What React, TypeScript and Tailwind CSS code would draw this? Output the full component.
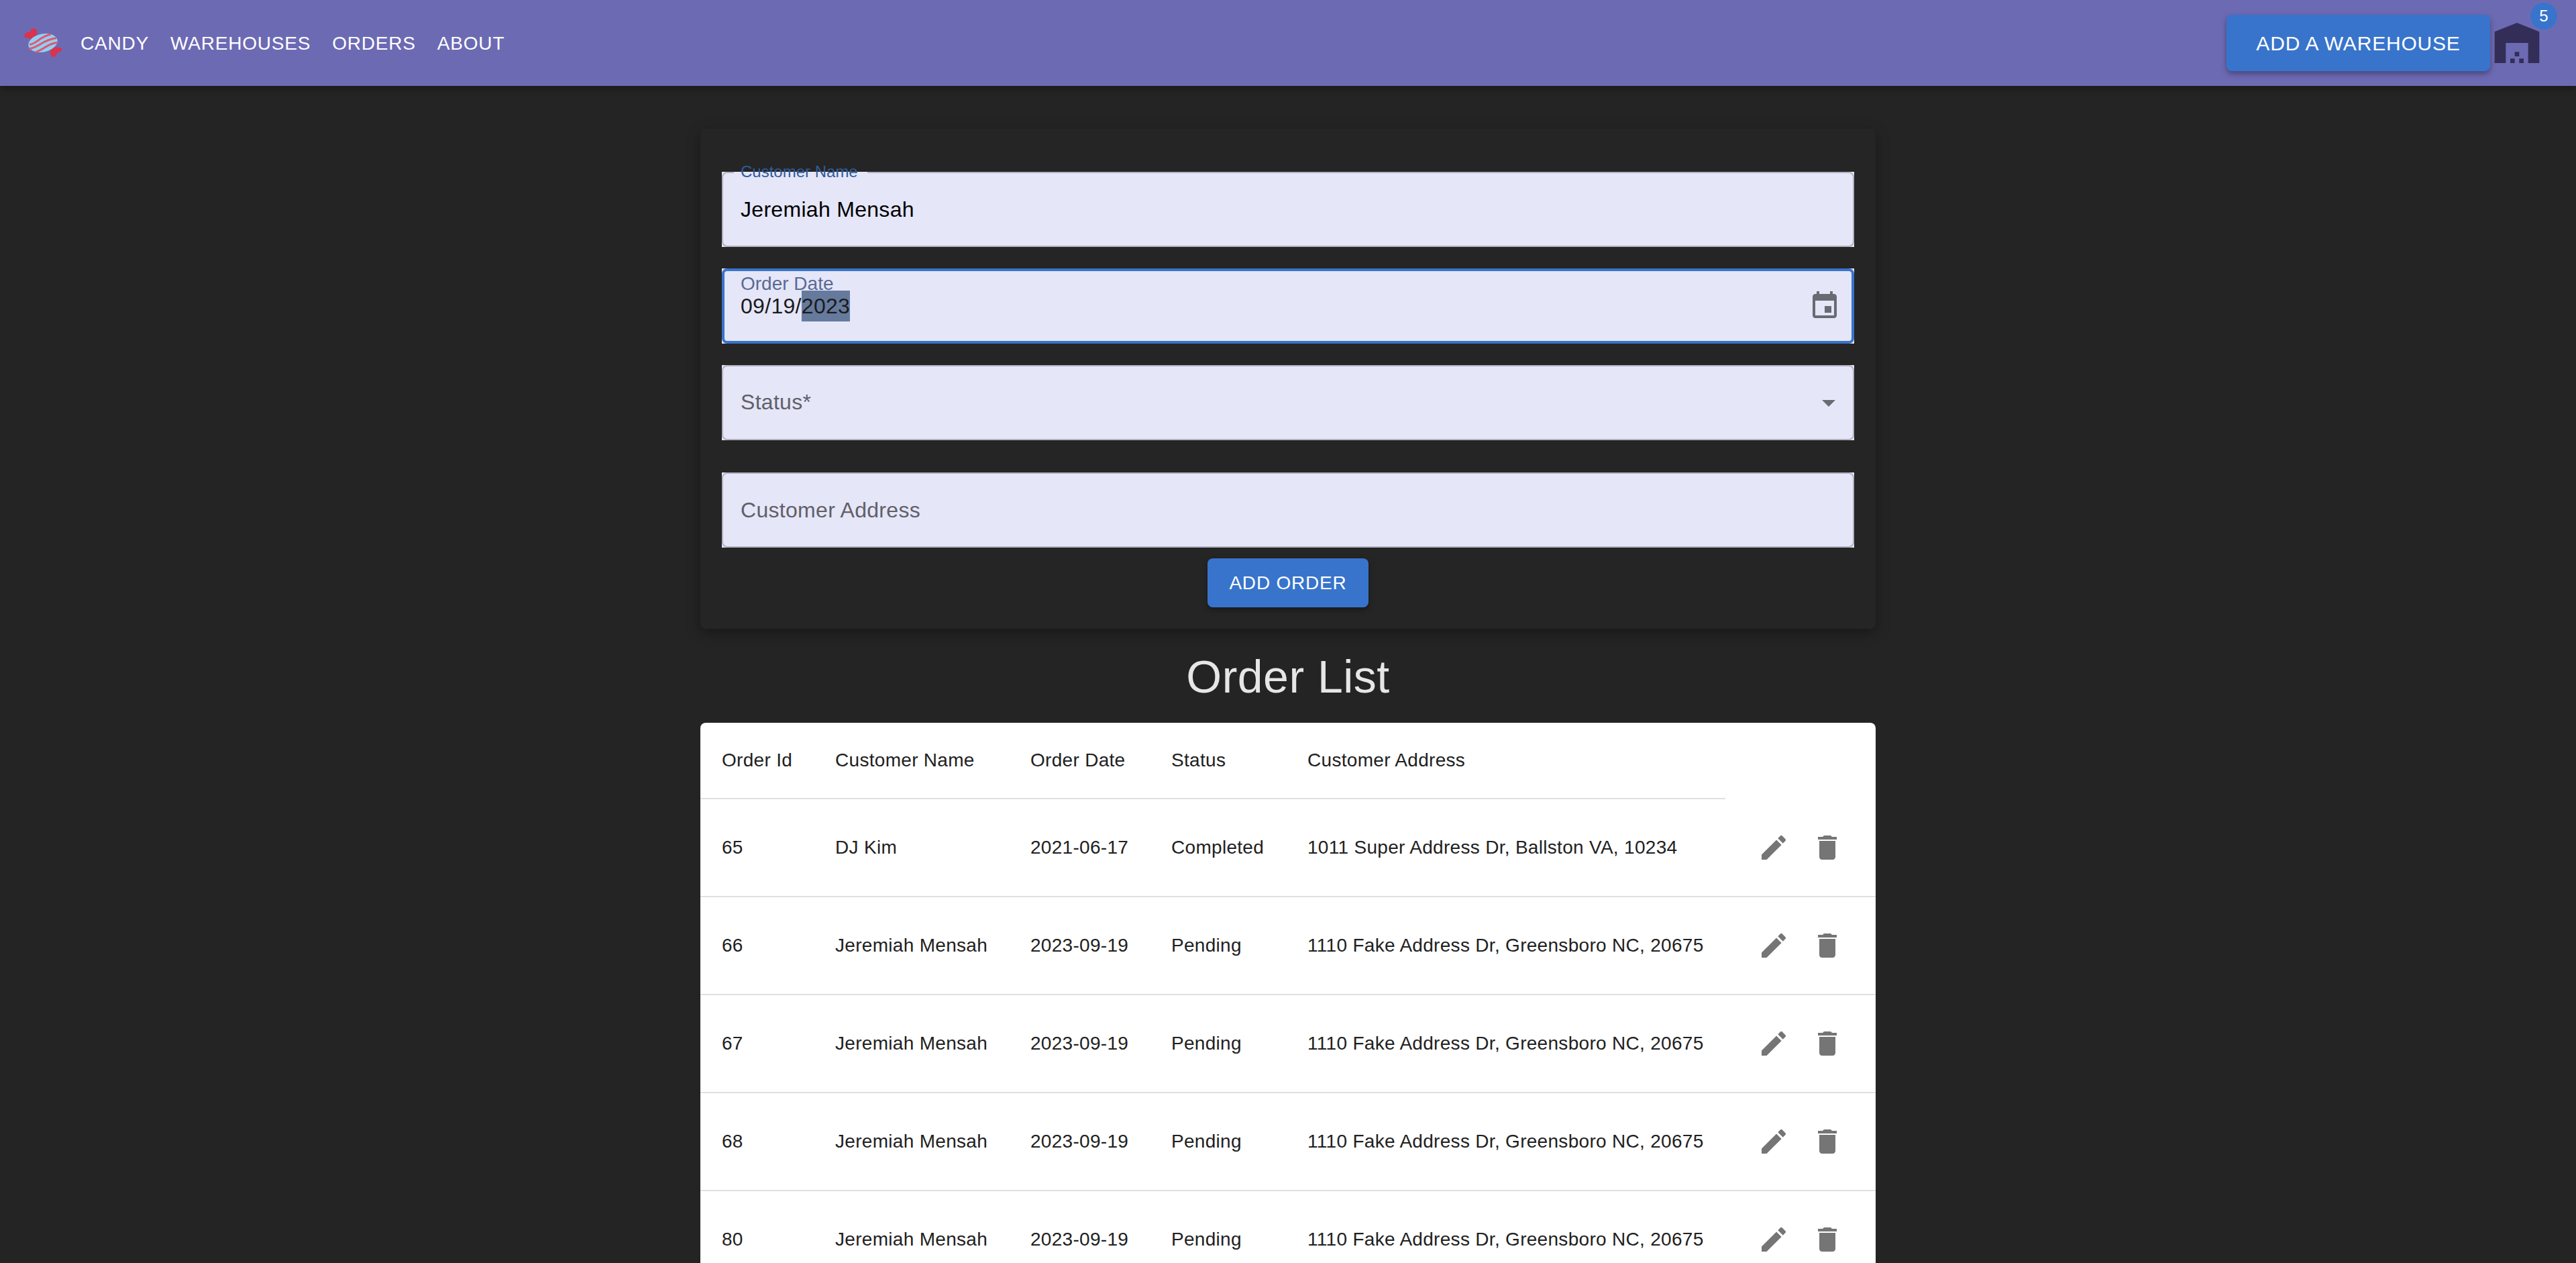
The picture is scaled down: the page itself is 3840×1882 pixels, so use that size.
const sans = "font-['Liberation_Sans',Arial,sans-serif]";

const orders = [
  { id: 65, name: "DJ Kim", date: "2021-06-17", status: "Completed", address: "1011 Super Address Dr, Ballston VA, 10234" },
  { id: 66, name: "Jeremiah Mensah", date: "2023-09-19", status: "Pending", address: "1110 Fake Address Dr, Greensboro NC, 20675" },
  { id: 67, name: "Jeremiah Mensah", date: "2023-09-19", status: "Pending", address: "1110 Fake Address Dr, Greensboro NC, 20675" },
  { id: 68, name: "Jeremiah Mensah", date: "2023-09-19", status: "Pending", address: "1110 Fake Address Dr, Greensboro NC, 20675" },
  { id: 80, name: "Jeremiah Mensah", date: "2023-09-19", status: "Pending", address: "1110 Fake Address Dr, Greensboro NC, 20675" },
];

const CandyLogo = () => (
  <svg width="58" height="44" viewBox="0 0 58 44" className="shrink-0">
    <path d="M11 16 L1 14 L0 10 L4 6 L8 6 L11 1 L16 0 L19 3 L19 10 Z" fill="#d9344f" />
    <path d="M44 28 L54 29 L57 31 L53 36 L50 36 L47 42 L41 43 L39 38 L38 31 Z" fill="#d9344f" />
    <g transform="rotate(-12 28 22)">
      <ellipse cx="28" cy="22" rx="22" ry="13.5" fill="#8fd0f2" />
      <path d="M8 20 C18 22 24 12 42 12" fill="none" stroke="#e2566f" strokeWidth="3" />
      <path d="M6 26 C20 28 28 17 49 19" fill="none" stroke="#e2566f" strokeWidth="3" />
      <path d="M14 33 C26 33 34 24 49 26" fill="none" stroke="#e2566f" strokeWidth="3" />
    </g>
  </svg>
);

const NavBar = () => (
  <header className="h-[128px] bg-[#6d6ab4] flex items-center justify-between pl-[36px] pr-[48px] shadow-[0_4px_10px_rgba(0,0,0,0.3)]">
    <div className="flex items-center">
      <CandyLogo />
      <nav className="ml-[26px] mt-[1px] flex gap-[32px] text-[28px] tracking-[0.8px] text-white">
        <span>CANDY</span>
        <span>WAREHOUSES</span>
        <span>ORDERS</span>
        <span>ABOUT</span>
      </nav>
    </div>
    <div className="flex items-center">
      <button className="h-[84px] w-[393px] rounded-[8px] bg-[#3874cb] text-white text-[30px] tracking-[0.8px] shadow-[0_4px_8px_rgba(0,0,0,0.35)]">
        ADD A WAREHOUSE
      </button>
      <div className="relative w-[80px] h-[80px]">
        <svg width="80" height="80" viewBox="0 0 24 24" fill="#322e57">
          <path d="M22 21V7L12 3 2 7v14h5v-9h10v9h5zm-11-2H9v2h2v-2zm2-3h-2v2h2v-2zm2 3h-2v2h2v-2z" />
        </svg>
        <span className="absolute top-[-20px] right-[-20px] w-[40px] h-[40px] rounded-full bg-[#3874cb] text-white text-[24px] flex items-center justify-center">
          5
        </span>
      </div>
    </div>
  </header>
);

const Field = ({ children, focused }: { children: React.ReactNode; focused?: boolean }) => (
  <div className="relative h-[112px] bg-[#e5e6f8] flex items-center px-[28px] text-[32px] tracking-[0.3px]">
    {children}
    <div
      className={
        focused
          ? "absolute inset-0 rounded-[8px] border-[4px] border-[#3874cb] pointer-events-none"
          : "absolute inset-0 rounded-[8px] border-[2px] border-[#b1b1c1] pointer-events-none"
      }
    />
  </div>
);

const OrderForm = () => (
  <section className="w-[1752px] mx-auto mt-[64px] rounded-[8px] bg-[#252525] p-[32px] pt-[64px] shadow-[0_6px_20px_rgba(0,0,0,0.35)]">
    <div className="relative">
      <Field>
        <span className="text-black">Jeremiah Mensah</span>
      </Field>
      {/* gap in the top border where the floated label sits */}
      <div className="absolute left-[18px] top-0 w-[199px] h-[2px] bg-[#e5e6f8]" />
      <span className="absolute left-[28px] top-[-16px] text-[24px] leading-[32px] text-[#2f5c99]">Customer Name</span>
    </div>
    <div className="mt-[32px]">
      <Field focused>
        <span className="absolute left-[28px] top-[8px] text-[28px] leading-[30px] tracking-normal text-[#5a6a94]">Order Date</span>
        <span className="text-[#1b1b1b]">
          09/19/<span className="bg-[#667a9d] inline-block h-[46px] leading-[46px]">2023</span>
        </span>
        <svg width="48" height="48" viewBox="0 0 24 24" fill="#6a6a72" className="absolute right-[20px] top-[32px]">
          <path d="M17 12h-5v5h5v-5zM16 1v2H8V1H6v2H5c-1.11 0-1.99.9-1.99 2L3 19c0 1.1.89 2 2 2h14c1.1 0 2-.9 2-2V5c0-1.1-.9-2-2-2h-1V1h-2zm3 18H5V8h14v11z" />
        </svg>
      </Field>
    </div>
    <div className="mt-[32px]">
      <Field>
        <span className="-mt-[2px] text-[#606068]">Status*</span>
        <svg width="48" height="48" viewBox="0 0 24 24" fill="#6a6a72" className="absolute right-[14px] top-[32px]">
          <path d="M7 10l5 5 5-5z" />
        </svg>
      </Field>
    </div>
    <div className="mt-[48px]">
      <Field>
        <span className="text-[#606068]">Customer Address</span>
      </Field>
    </div>
    <div className="mt-[16px] flex justify-center">
      <button className="w-[240px] h-[73px] rounded-[8px] bg-[#3874cb] text-white text-[28px] tracking-[0.8px] shadow-[0_4px_8px_rgba(0,0,0,0.35)]">
        ADD ORDER
      </button>
    </div>
  </section>
);

const OrderTable = () => (
  <div className="w-[1752px] mx-auto mt-[15px] rounded-t-[8px] bg-white overflow-hidden">
    <table className="w-full table-fixed border-collapse text-[28px] tracking-[0.3px] text-[#212121] text-left whitespace-nowrap">
      <colgroup>
        <col className="w-[169px]" />
        <col className="w-[291px]" />
        <col className="w-[210px]" />
        <col className="w-[203px]" />
        <col className="w-[655px]" />
        <col className="w-[224px]" />
      </colgroup>
      <thead>
        <tr className="h-[113px]">
          {["Order Id", "Customer Name", "Order Date", "Status", "Customer Address"].map((h) => (
            <th key={h} className="px-[32px] font-normal border-b-[2px] border-[#e0e0e0]">
              {h}
            </th>
          ))}
          <th />
        </tr>
      </thead>
      <tbody>
        {orders.map((o) => (
          <tr key={o.id} className="h-[146px] border-b-[2px] border-[#e0e0e0]">
            <td className="px-[32px]">{o.id}</td>
            <td className="px-[32px]">{o.name}</td>
            <td className="px-[32px]">{o.date}</td>
            <td className="px-[32px]">{o.status}</td>
            <td className="px-[32px]">{o.address}</td>
            <td className="pr-[32px]">
              <div className="flex justify-end">
                <button className="w-[80px] h-[80px] flex items-center justify-center">
                  <svg width="48" height="48" viewBox="0 0 24 24" fill="#757575">
                    <path d="M3 17.25V21h3.75L17.81 9.94l-3.75-3.75L3 17.25zM20.71 7.04c.39-.39.39-1.02 0-1.41l-2.34-2.34a.9959.9959 0 0 0-1.41 0l-1.83 1.83 3.75 3.75 1.83-1.83z" />
                  </svg>
                </button>
                <button className="w-[80px] h-[80px] flex items-center justify-center">
                  <svg width="48" height="48" viewBox="0 0 24 24" fill="#757575">
                    <path d="M6 19c0 1.1.9 2 2 2h8c1.1 0 2-.9 2-2V7H6v12zM19 4h-3.5l-1-1h-5l-1 1H5v2h14V4z" />
                  </svg>
                </button>
              </div>
            </td>
          </tr>
        ))}
      </tbody>
    </table>
  </div>
);

export default function App() {
  return (
    <div className={`${sans} h-[1882px] overflow-hidden bg-[#242424]`}>
      <NavBar />
      <OrderForm />
      <h1 className="mt-[17px] text-center text-[68px] leading-[108px] tracking-[0.5px] text-[#e6e6e6]">Order List</h1>
      <OrderTable />
    </div>
  );
}
